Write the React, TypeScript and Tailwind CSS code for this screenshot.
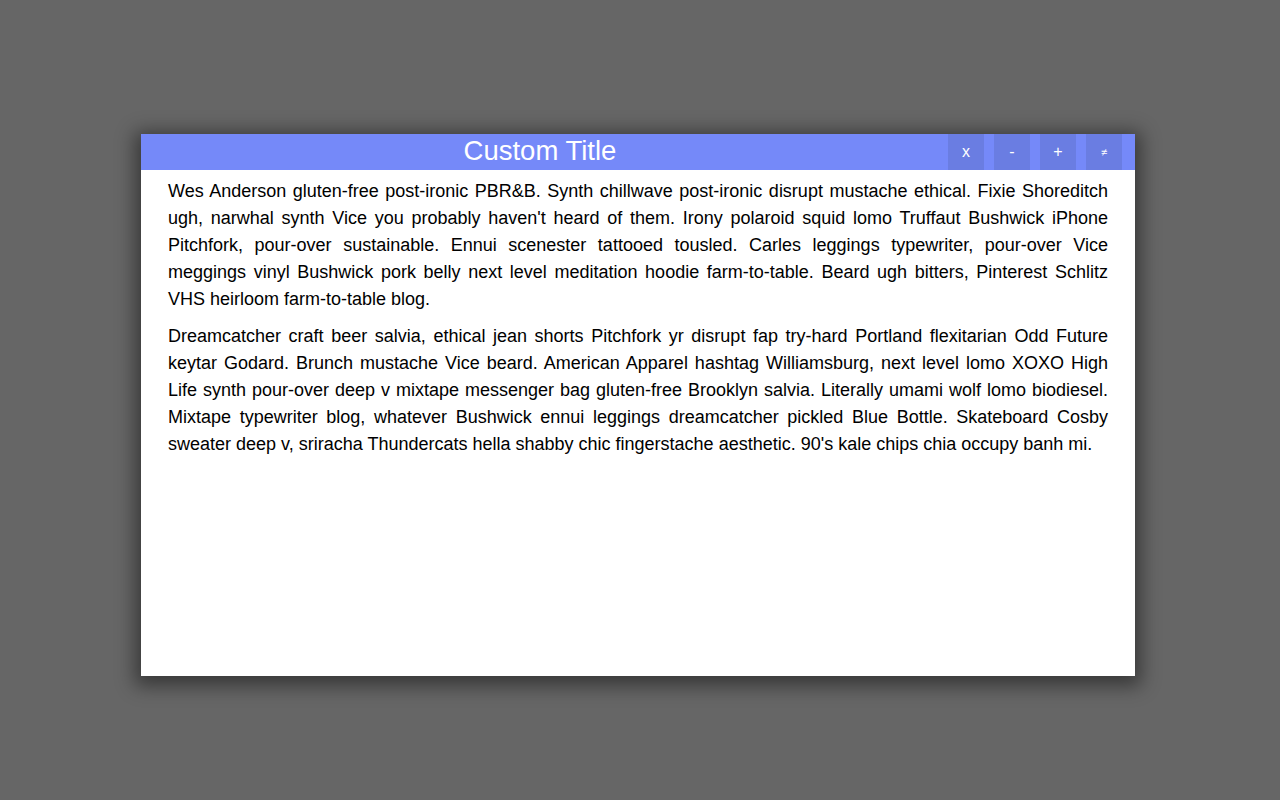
import React from 'react';

const paragraphs = [
    "Wes Anderson gluten-free post-ironic PBR&B. Synth chillwave post-ironic disrupt mustache ethical. Fixie Shoreditch ugh, narwhal synth Vice you probably haven't heard of them. Irony polaroid squid lomo Truffaut Bushwick iPhone Pitchfork, pour-over sustainable. Ennui scenester tattooed tousled. Carles leggings typewriter, pour-over Vice meggings vinyl Bushwick pork belly next level meditation hoodie farm-to-table. Beard ugh bitters, Pinterest Schlitz VHS heirloom farm-to-table blog.",
    "Dreamcatcher craft beer salvia, ethical jean shorts Pitchfork yr disrupt fap try-hard Portland flexitarian Odd Future keytar Godard. Brunch mustache Vice beard. American Apparel hashtag Williamsburg, next level lomo XOXO High Life synth pour-over deep v mixtape messenger bag gluten-free Brooklyn salvia. Literally umami wolf lomo biodiesel. Mixtape typewriter blog, whatever Bushwick ennui leggings dreamcatcher pickled Blue Bottle. Skateboard Cosby sweater deep v, sriracha Thundercats hella shabby chic fingerstache aesthetic. 90's kale chips chia occupy banh mi.",
];

const buttons = ['x', '-', '+', '≠'];

export default function App() {
    return (
        <div className="min-h-screen bg-[#666666] flex items-start justify-start pt-[134px] pl-[141px] font-['Liberation_Sans',Arial,sans-serif]">
            <div className="w-[994px] h-[542px] bg-white flex flex-col shadow-[0_4px_18px_6px_rgba(0,0,0,0.45)]">
                <div className="h-9 bg-[#7589f9] flex items-stretch pr-[13px]">
                    <div className="flex-1 flex items-center justify-center pr-[9px] pb-[3px] text-white text-[27.5px] leading-none">
                        Custom Title
                    </div>
                    <div className="flex gap-[10px]">
                        {buttons.map((b) => (
                            <button
                                key={b}
                                className={`w-9 h-9 bg-[#6a7de2] text-white flex items-center justify-center ${b === '≠' ? 'text-[11px]' : 'text-[16px]'}`}
                            >
                                {b}
                            </button>
                        ))}
                    </div>
                </div>
                <div className="px-[27px] pt-[8px] text-black text-[18px] leading-[27px] text-justify">
                    {paragraphs.map((p, i) => (
                        <p key={i} className="mb-[10px]">{p}</p>
                    ))}
                </div>
            </div>
        </div>
    );
}
